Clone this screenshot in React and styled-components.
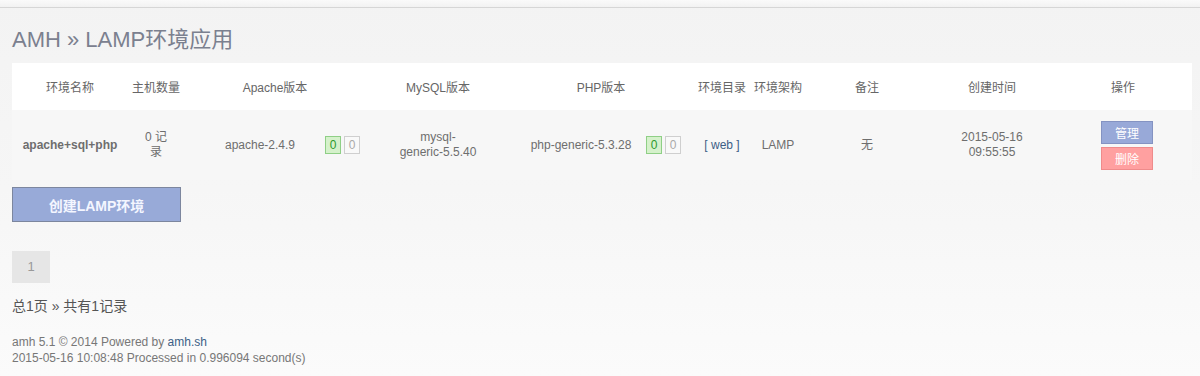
import React from 'react'
import styled, { createGlobalStyle } from 'styled-components'

const GlobalStyle = createGlobalStyle`
  html, body {
    margin: 0;
    padding: 0;
  }
  body {
    background: linear-gradient(to bottom, #f3f3f3 0%, #f6f6f6 50%, #fbfbfb 100%);
    font-family: Arial, "Liberation Sans", "Noto Sans CJK SC", sans-serif;
    color: #666;
    min-height: 376px;
  }
`

const TopBar = styled.div`
  height: 7px;
  background: linear-gradient(to bottom, #fafafa, #f2f2f2);
  border-bottom: 1px solid #d6d6d6;
`

const Main = styled.div`
  width: 1180px;
  padding-left: 12px;
`

const Title = styled.h1`
  margin: 17px 0 8px;
  font-size: 22px;
  line-height: 30px;
  font-weight: normal;
  color: #7b808f;
`

const Table = styled.table`
  width: 1180px;
  table-layout: fixed;
  border-collapse: collapse;
  font-size: 12px;
`

const HeadRow = styled.tr`
  background: #fff;
  height: 47px;
`

const Th = styled.th`
  font-weight: normal;
  color: #666;
  text-align: center;
  padding: 0;
`

const BodyRow = styled.tr`
  background: #f7f7f7;
  height: 70px;
`

const Td = styled.td`
  text-align: ${p => (p.$left ? 'left' : 'center')};
  padding: 0 ${p => p.$pr || 0}px 0 ${p => p.$pl || 0}px;
  color: #6e6e6e;
  line-height: 15px;
  font-weight: ${p => (p.$bold ? 'bold' : 'normal')};
  vertical-align: middle;
`

const CountText = styled.div`
  width: 30px;
  margin: 0 auto;
  text-align: center;
`

const Box = styled.span`
  display: inline-block;
  width: 14px;
  height: 16px;
  line-height: 16px;
  margin-right: 3px;
  text-align: center;
  font-size: 12px;
  border: 1px solid ${p => (p.$on ? '#8fcf86' : '#cfcfcf')};
  background: ${p => (p.$on ? '#d5f1cb' : '#f9f9f9')};
  color: ${p => (p.$on ? '#2e9a2e' : '#aaa')};
`

const DirLink = styled.a`
  color: #3d5f86;
  text-decoration: none;
`

const ActionCol = styled.div`
  display: flex;
  flex-direction: column;
  align-items: center;
  gap: 3px;
  padding-left: 8px;
`

const SmallButton = styled.button`
  width: 52px;
  height: 23px;
  padding: 0;
  font-size: 12px;
  font-family: inherit;
  color: #fff;
  border: 1px solid ${p => (p.$danger ? '#ef8b8b' : '#8493c2')};
  background: ${p => (p.$danger ? '#ffa0a0' : '#98a9d8')};
  cursor: pointer;
`

const CreateButton = styled.button`
  display: block;
  margin-top: 7px;
  width: 169px;
  height: 35px;
  padding: 0;
  font-size: 14px;
  font-weight: bold;
  font-family: inherit;
  color: #f4f6ff;
  background: #98aad8;
  border: 1px solid #7c869e;
  cursor: pointer;
`

const Pager = styled.div`
  display: flex;
  margin-top: 29px;
`

const PageNum = styled.span`
  width: 38px;
  height: 32px;
  line-height: 32px;
  text-align: center;
  font-size: 13px;
  background: #e6e6e6;
  color: #999;
`

const Summary = styled.div`
  margin-top: 13px;
  font-size: 14px;
  line-height: 20px;
  color: #555;
`

const Footer = styled.div`
  margin-top: 18px;
  font-size: 12px;
  line-height: 16px;
  color: #777;

  a {
    color: #3d5f86;
    text-decoration: none;
  }
`

function Counter() {
  return (
    <>
      <Box $on>0</Box>
      <Box>0</Box>
    </>
  )
}

export default function App() {
  return (
    <>
      <GlobalStyle />
      <TopBar />
      <Main>
        <Title>AMH » LAMP环境应用</Title>
        <Table>
          <colgroup>
            <col style={{ width: 116 }} />
            <col style={{ width: 56 }} />
            <col style={{ width: 136 }} />
            <col style={{ width: 46 }} />
            <col style={{ width: 144 }} />
            <col style={{ width: 132 }} />
            <col style={{ width: 50 }} />
            <col style={{ width: 60 }} />
            <col style={{ width: 52 }} />
            <col style={{ width: 126 }} />
            <col style={{ width: 124 }} />
            <col style={{ width: 138 }} />
          </colgroup>
          <thead>
            <HeadRow>
              <Th>环境名称</Th>
              <Th>主机数量</Th>
              <Th colSpan={2}>Apache版本</Th>
              <Th>MySQL版本</Th>
              <Th colSpan={2}>PHP版本</Th>
              <Th>环境目录</Th>
              <Th>环境架构</Th>
              <Th>备注</Th>
              <Th>创建时间</Th>
              <Th>操作</Th>
            </HeadRow>
          </thead>
          <tbody>
            <BodyRow>
              <Td $bold>apache+sql+php</Td>
              <Td>
                <CountText>0 记录</CountText>
              </Td>
              <Td $pl={16}>apache-2.4.9</Td>
              <Td $left $pl={5}>
                <Counter />
              </Td>
              <Td>
                mysql-
                <br />
                generic-5.5.40
              </Td>
              <Td $pl={10}>php-generic-5.3.28</Td>
              <Td $left $pl={4}>
                <Counter />
              </Td>
              <Td>
                <DirLink href="#">[ web ]</DirLink>
              </Td>
              <Td>LAMP</Td>
              <Td>无</Td>
              <Td>
                2015-05-16
                <br />
                09:55:55
              </Td>
              <Td>
                <ActionCol>
                  <SmallButton>管理</SmallButton>
                  <SmallButton $danger>删除</SmallButton>
                </ActionCol>
              </Td>
            </BodyRow>
          </tbody>
        </Table>
        <CreateButton>创建LAMP环境</CreateButton>
        <Pager>
          <PageNum>1</PageNum>
        </Pager>
        <Summary>总1页 » 共有1记录</Summary>
        <Footer>
          amh 5.1 © 2014 Powered by <a href="#">amh.sh</a>
          <br />
          2015-05-16 10:08:48 Processed in 0.996094 second(s)
        </Footer>
      </Main>
    </>
  )
}
